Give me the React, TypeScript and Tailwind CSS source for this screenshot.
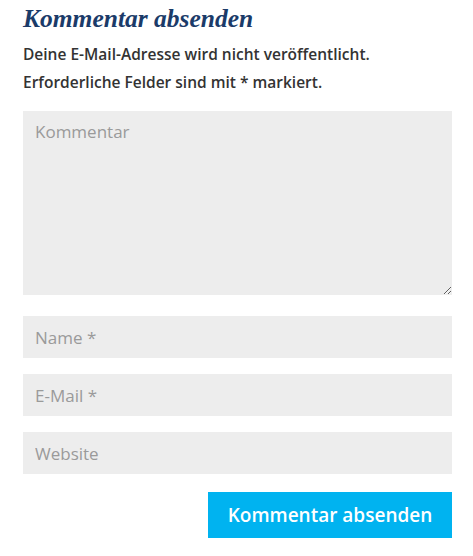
import React from 'react';

const fieldClass =
  'block w-full h-[42px] bg-[#ededed] px-3 text-[17px] text-[#555] placeholder:text-[#9a9a9a] outline-none';

const App: React.FC = () => {
  return (
    <div className="min-h-screen bg-white pl-[23px] pr-[21px] pt-[5px] font-['Open_Sans',sans-serif]">
      <h3 className="font-['Liberation_Serif',serif] italic font-bold text-[25.5px] leading-[28px] text-[#1b3b69]">
        Kommentar absenden
      </h3>
      <p className="mt-[7px] text-[15.5px] leading-[28px] font-semibold text-[#333]">
        Deine E-Mail-Adresse wird nicht veröffentlicht.
        <br />
        Erforderliche Felder sind mit * markiert.
      </p>

      <form className="mt-[15px] flex flex-col">
        <textarea
          placeholder="Kommentar"
          className="block w-full h-[184px] bg-[#ededed] px-3 py-[8px] text-[17px] text-[#555] placeholder:text-[#9a9a9a] outline-none resize-y"
        />
        <input placeholder="Name *" className={`${fieldClass} mt-[21px]`} />
        <input placeholder="E-Mail *" className={`${fieldClass} mt-[16px]`} />
        <input placeholder="Website" className={`${fieldClass} mt-[16px]`} />
        <div className="mt-[18px] flex justify-end">
          <button
            type="button"
            className="h-[46px] w-[244px] bg-[#00b3f0] text-white text-[19px] font-semibold"
          >
            Kommentar absenden
          </button>
        </div>
      </form>
    </div>
  );
};

export default App;
